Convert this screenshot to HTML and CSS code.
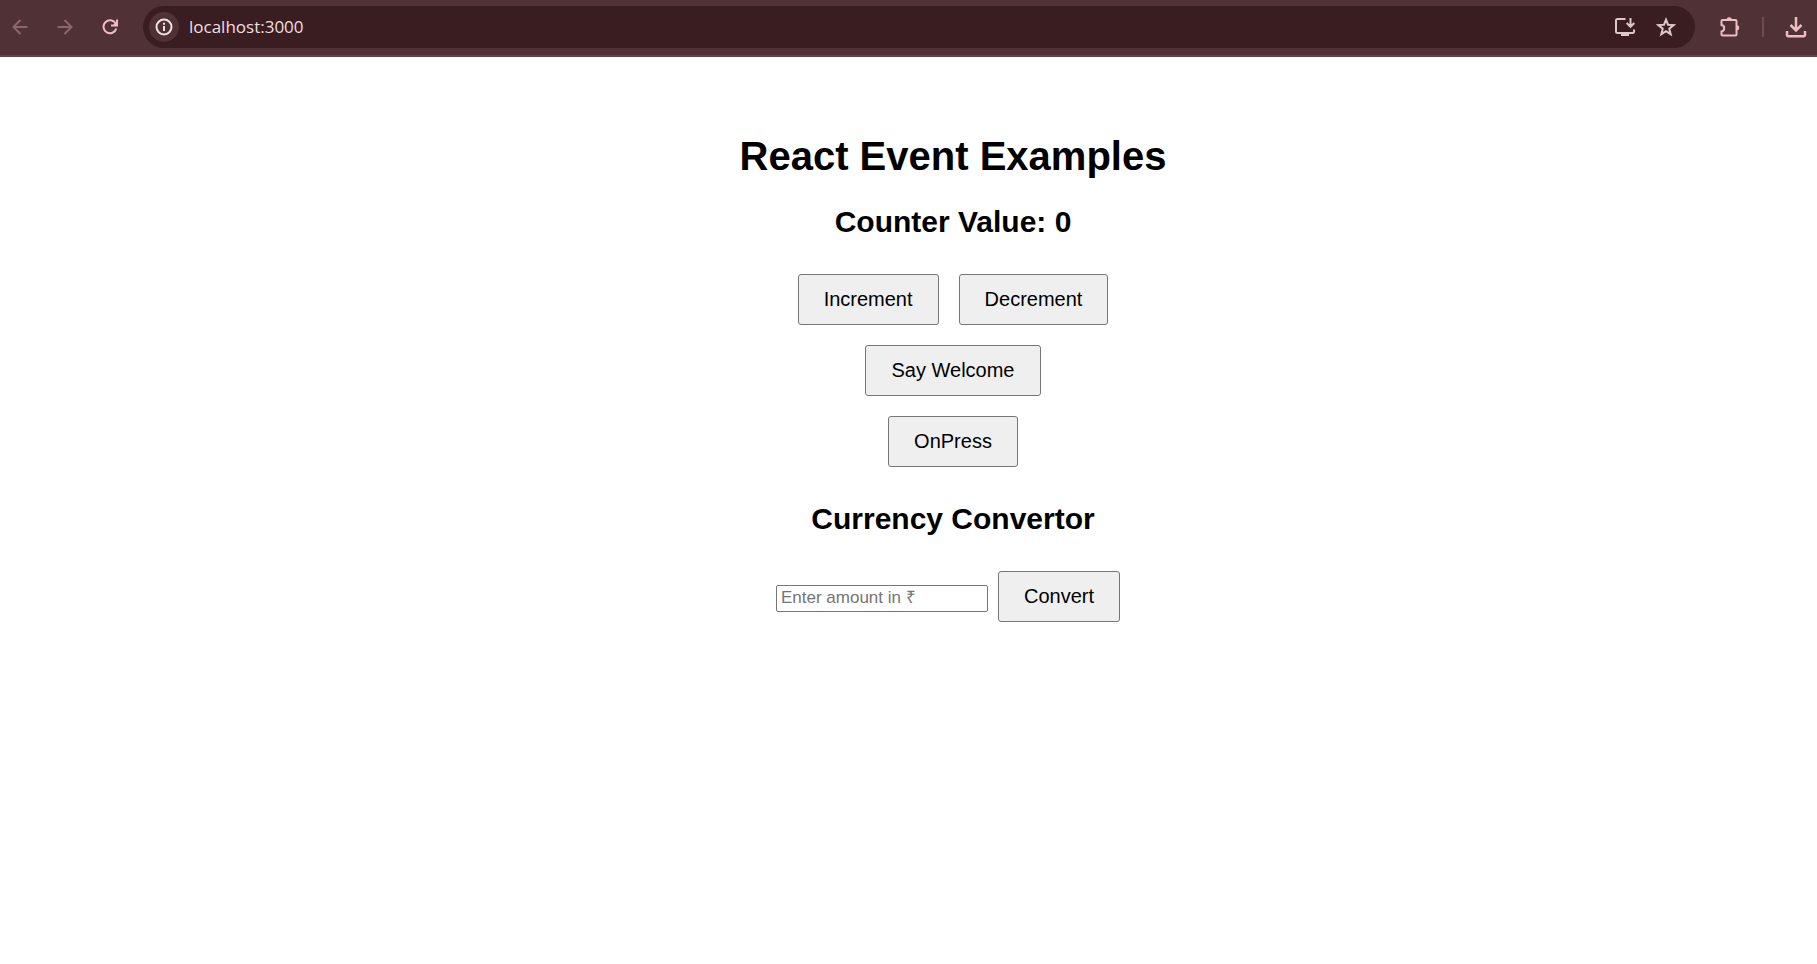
FILE: index.html
```html
<!DOCTYPE html>
<html lang="en">
<head>
<meta charset="utf-8">
<title>React Event Examples</title>
<link rel="stylesheet" href="styles.css">
</head>
<body>
<header class="toolbar">
  <nav class="nav">
    <button class="icon-button" aria-label="Back" disabled><svg width="16" height="16" viewBox="0 0 16 16"><path d="M15.5 8H1.5M8.5 1L1.5 8l7 7"/></svg></button>
    <button class="icon-button" aria-label="Forward" disabled><svg width="16" height="16" viewBox="0 0 16 16"><path d="M.5 8h14M7.500 1l7 7-7 7"/></svg></button>
    <button class="icon-button" aria-label="Reload"><svg width="16" height="16" viewBox="0 0 16 16"><path d="M13.600 4.400A6.500 6.500 0 1 0 14.300 9.500M15 .500v6H9"/><path class="fill" d="M15.500 2v4.500H10.500z"/></svg></button>
  </nav>
  <div class="address">
    <button class="site-info" aria-label="Site information"><svg width="18" height="18" viewBox="0 0 18 18"><circle cx="9" cy="9" r="7.500"/><path d="M9 8v5M9 4.800v2"/></svg></button>
    <input class="url" aria-label="Address" value="localhost:3000">
    <button class="icon-button" aria-label="Install app"><svg width="22" height="20" viewBox="0 0 22 20"><path d="M11.500 2H3.500a1.500 1.500 0 0 0-1.500 1.500v11a1.500 1.500 0 0 0 1.500 1.500h15a1.500 1.500 0 0 0 1.500-1.500V12.500M16.500 1v8.500M12.700 6l3.800 3.800L20.300 6"/><path class="fill" d="M7 16h8v3H7z"/></svg></button>
    <button class="icon-button" aria-label="Bookmark this tab"><svg width="20" height="20" viewBox="0 0 20 20"><path d="M10 2.700l2 5 5.600.400-4.300 3.600 1.400 5.500L10 14.200l-4.700 3 1.400-5.500L2.400 8.100 8 7.700z"/></svg></button>
  </div>
  <div class="actions">
    <button class="icon-button" aria-label="Extensions"><svg width="22" height="22" viewBox="0 0 22 22"><path d="M3.500 4h13a1 1 0 0 1 1 1v13.500a1 1 0 0 1-1 1h-13a1 1 0 0 1-1-1V15.500a3.300 3.300 0 0 0 0-6.500V5a1 1 0 0 1 1-1z"/><path class="fill" d="M7.500 4a2.700 2.700 0 0 1 5.400 0zM17.500 9a2.700 2.700 0 0 1 0 5.400z"/></svg></button>
    <span class="divider"></span>
    <button class="icon-button" aria-label="Downloads"><svg class="bold" width="22" height="22" viewBox="0 0 22 22"><path d="M11 1v13M5.500 9l5.500 5.500L16.500 9M2 15v4a1.200 1.200 0 0 0 1.200 1.200h15.600A1.200 1.200 0 0 0 20 19v-4"/></svg></button>
  </div>
</header>
<main class="app">
  <h1 class="title">React Event Examples</h1>
  <h2 class="heading">Counter Value: 0</h2>
  <div class="row row-spaced">
    <button class="btn">Increment</button>
    <button class="btn">Decrement</button>
  </div>
  <div class="row"><button class="btn">Say Welcome</button></div>
  <div class="row"><button class="btn">OnPress</button></div>
  <h2 class="heading">Currency Convertor</h2>
  <form class="row converter">
    <input class="amount" type="text" aria-label="Amount in rupees" placeholder="Enter amount in ₹">
    <button class="btn" type="button">Convert</button>
  </form>
</main>
</body>
</html>
```
FILE: styles.css
```css
* { box-sizing: border-box; }
body {
  margin: 0;
  background: #fff;
  color: #000;
  font-family: "Liberation Sans", Arial, sans-serif;
}
.toolbar {
  display: flex;
  align-items: center;
  height: 57px;
  padding: 0 10px 1px;
  background: #503236;
  border-bottom: 2px solid #5a4748;
}
.nav { display: flex; gap: 25px; margin-right: 23px; }
.icon-button {
  display: flex;
  align-items: center;
  justify-content: center;
  min-width: 20px;
  padding: 0;
  border: 0;
  background: none;
  color: #eebcc3;
}
.icon-button:disabled { color: #8b676c; }
svg { display: block; fill: none; stroke: currentColor; stroke-width: 2; }
svg .fill { fill: currentColor; stroke: none; }
svg.bold { stroke-width: 2.5; }
.address {
  flex: 1;
  display: flex;
  align-items: center;
  height: 42px;
  gap: 20px;
  padding: 0 19px 0 6px;
  border-radius: 21px;
  background: #3a1d20;
}
.address .icon-button { color: #dcc8ca; }
.site-info {
  display: flex;
  align-items: center;
  justify-content: center;
  width: 30px;
  height: 30px;
  margin-right: -10px;
  padding: 0;
  border: 0;
  border-radius: 50%;
  background: #503236;
  color: #f0dfe0;
}
.url {
  flex: 1;
  min-width: 0;
  padding: 0;
  border: 0;
  outline: 0;
  background: none;
  color: #f0dfe0;
  font: 17px/24px "Open Sans", "Noto Sans", sans-serif;
}
.actions { display: flex; align-items: center; gap: 21px; margin-left: 24px; }
.divider { width: 2px; height: 20px; background: #6f4b50; }
.app {
  display: flex;
  flex-direction: column;
  align-items: center;
  gap: 20px;
  padding: 76px 0 40px 89px;
}
.title { margin: 0 0 6px; font-size: 40px; line-height: 46px; }
.heading { margin: 0; padding: 0 0 15px; font-size: 30px; line-height: 34px; }
.row + .heading { margin-top: 15px; }
.row { display: flex; align-items: baseline; }
.row-spaced { gap: 20px; }
.converter { gap: 10px; margin-right: 10px; }
.btn {
  padding: 13px 25px;
  border: 1px solid #767676;
  border-radius: 3px;
  background: #efefef;
  color: #000;
  font: 20px/23px "Liberation Sans", Arial, sans-serif;
}
.amount {
  width: 212px;
  padding: 2px 4px 4px;
  border: 1px solid #767676;
  border-radius: 2px;
  background: #fff;
  font: 17px/19px "Liberation Sans", Arial, sans-serif;
}
.amount::placeholder { color: #757575; }
```
